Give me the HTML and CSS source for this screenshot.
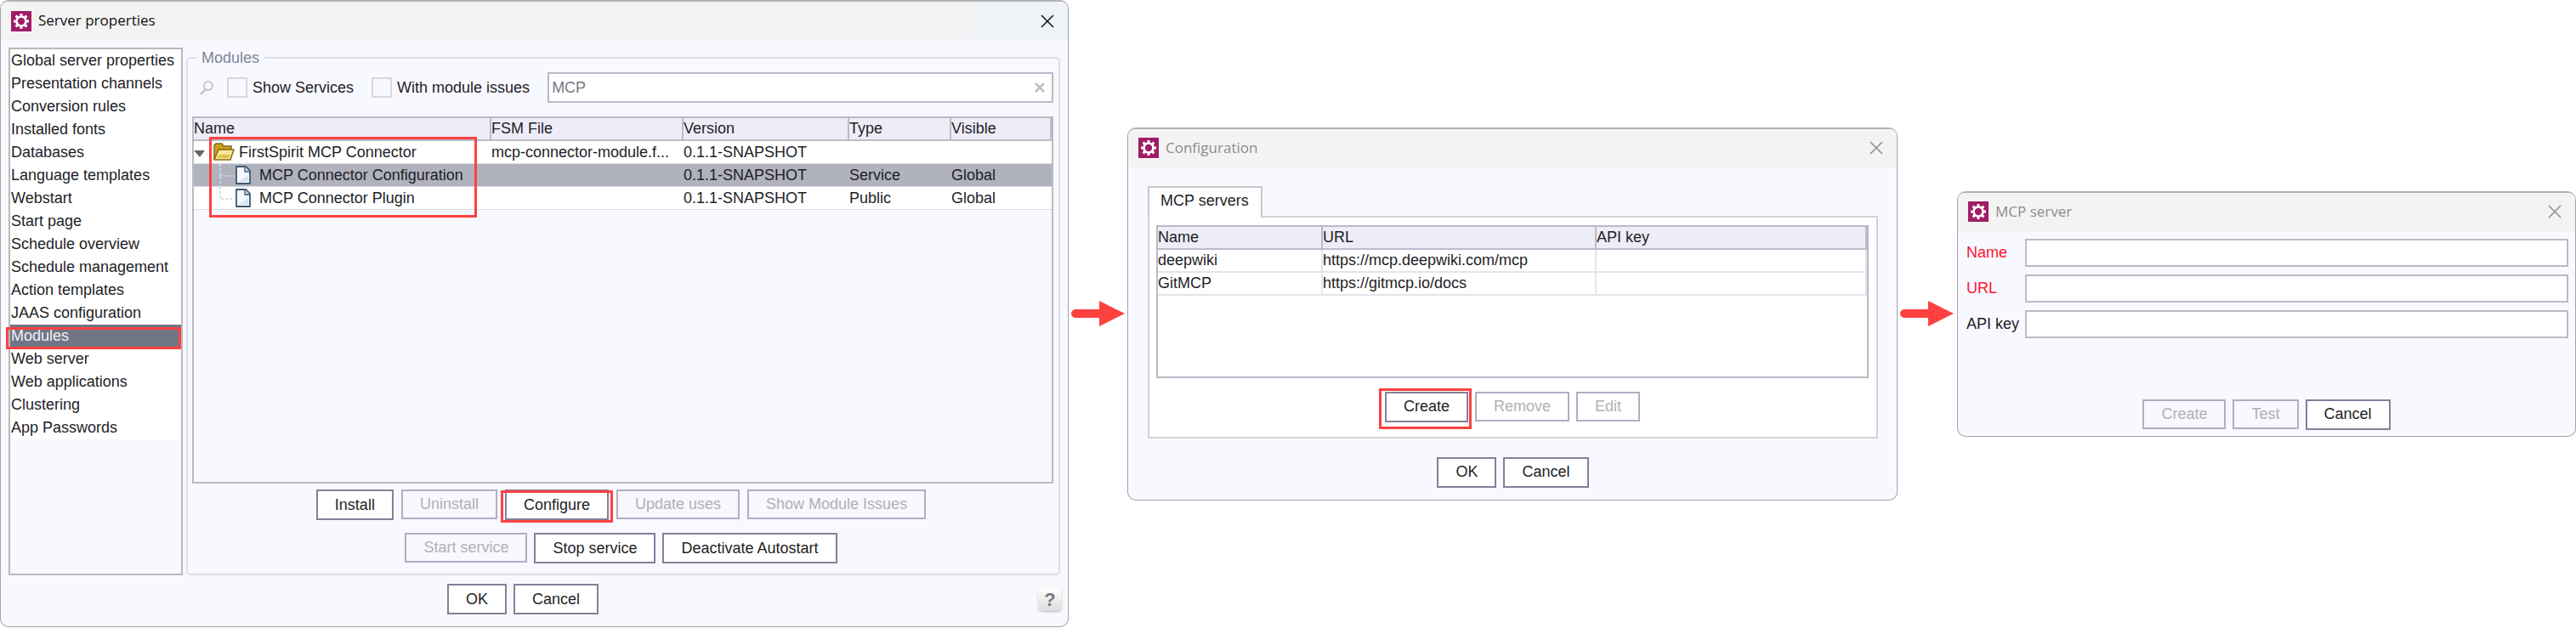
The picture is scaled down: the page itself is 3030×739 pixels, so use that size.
FILE: index.html
```html
<!DOCTYPE html>
<html lang="en">
<head>
  <meta charset="UTF-8">
  <meta name="viewport" content="width=device-width, initial-scale=1.0">
  <title>MCP Connector configuration</title>
  <link rel="stylesheet" href="styles.css">
</head>
<body>
  <!-- shared icons -->
  <svg class="sprite" aria-hidden="true">
    <symbol id="gear" viewBox="0 0 24 24">
      <rect width="24" height="24" fill="#a01c66"/>
      <g stroke="#fff" stroke-width="3">
        <path d="M12 3v18M3 12h18M5.600 5.600l12.800 12.800M18.400 5.600L5.600 18.400"/>
      </g>
      <circle cx="12" cy="12" r="5.500" fill="#a01c66" stroke="#fff" stroke-width="2.600"/>
    </symbol>
    <symbol id="close" viewBox="0 0 16 16">
      <path d="M1 1l14 14M15 1L1 15" fill="none" stroke="currentColor" stroke-width="1.500"/>
    </symbol>
    <symbol id="page" viewBox="0 0 20 24">
      <path d="M2 2h11l5 5v15H2z" fill="#f4f8fc" stroke="#3d5870" stroke-width="1.800" stroke-linejoin="round"/>
      <path d="M12 2v6h6" fill="#c9dced" stroke="#3d5870" stroke-width="1.300"/>
      <path d="M4 20h12V12z" fill="#d8e4ee"/>
    </symbol>
    <symbol id="arrow" viewBox="0 0 64 30">
      <path d="M5 10h28V0l30 15-30 15V20H5a5 5 0 0 1 0-10z" fill="#fd4141"/>
    </symbol>
  </svg>

  <div class="flow">
    <section class="window window-main">
      <div class="titlebar active">
        <svg class="app-icon"><use href="#gear"/></svg>
        <h1>Server properties</h1>
        <button class="close-btn" aria-label="Close"><svg><use href="#close"/></svg></button>
      </div>
      <div class="columns">
        <ul class="side-list">
          <li><a href="#">Global server properties</a></li>
          <li><a href="#">Presentation channels</a></li>
          <li><a href="#">Conversion rules</a></li>
          <li><a href="#">Installed fonts</a></li>
          <li><a href="#">Databases</a></li>
          <li><a href="#">Language templates</a></li>
          <li><a href="#">Webstart</a></li>
          <li><a href="#">Start page</a></li>
          <li><a href="#">Schedule overview</a></li>
          <li><a href="#">Schedule management</a></li>
          <li><a href="#">Action templates</a></li>
          <li><a href="#">JAAS configuration</a></li>
          <li class="selected"><a href="#">Modules</a></li>
          <li><a href="#">Web server</a></li>
          <li><a href="#">Web applications</a></li>
          <li><a href="#">Clustering</a></li>
          <li><a href="#">App Passwords</a></li>
        </ul>
        <fieldset class="modules">
          <legend>Modules</legend>
          <div class="filter">
            <svg class="search-icon" viewBox="0 0 18 18">
              <circle cx="11" cy="7" r="5" fill="none" stroke="#c4c4c8" stroke-width="2"/>
              <path d="M8 11l-6 6" stroke="#c4c4c8" stroke-width="2.500"/>
            </svg>
            <label><input type="checkbox"> Show Services</label>
            <label><input type="checkbox"> With module issues</label>
            <div class="search-box">
              <input type="text" value="MCP" aria-label="Filter modules">
              <button class="clear-btn" aria-label="Clear">
                <svg viewBox="0 0 12 12"><path d="M1 1l10 10M11 1L1 11" stroke="#bdbdc1" stroke-width="2.500"/></svg>
              </button>
            </div>
          </div>
          <div class="table-box module-table">
            <table>
              <colgroup><col class="c-name"><col class="c-file"><col class="c-version"><col class="c-type"><col></colgroup>
              <thead>
                <tr><th>Name</th><th>FSM File</th><th>Version</th><th>Type</th><th>Visible</th></tr>
              </thead>
              <tbody>
                <tr>
                  <td>
                    <div class="tree">
                      <svg class="tree-toggle" viewBox="0 0 23 27"><path d="M0 11h13l-6 8z" fill="#66666a"/><path d="M15 15h8" stroke="#c8c8ce" stroke-dasharray="2 2"/></svg>
                      <svg class="folder" viewBox="0 0 25 22">
                        <path d="M1 20V3l2-2h7l2 3h9v4" fill="#c99f22" stroke="#8a6a10" stroke-width="1.500"/>
                        <path d="M6 8h18l-4 12H1z" fill="#f6e69a" stroke="#8a6a10" stroke-width="1.500" stroke-linejoin="round"/>
                        <path d="M7 14h13l-2 4H4z" fill="#e3c34d"/>
                      </svg>
                      FirstSpirit MCP Connector
                    </div>
                  </td>
                  <td>mcp-connector-module.f...</td><td>0.1.1-SNAPSHOT</td><td></td><td></td>
                </tr>
                <tr class="selected">
                  <td>
                    <div class="tree child">
                      <svg class="branch" viewBox="0 0 18 27"><path d="M1 0v27M1 14h17" fill="none" stroke="#dcdce2" stroke-width="1.500" stroke-dasharray="3 2"/></svg>
                      <svg class="page"><use href="#page"/></svg>
                      MCP Connector Configuration
                    </div>
                  </td>
                  <td></td><td>0.1.1-SNAPSHOT</td><td>Service</td><td>Global</td>
                </tr>
                <tr>
                  <td>
                    <div class="tree child">
                      <svg class="branch" viewBox="0 0 18 27"><path d="M1 0v14h17" fill="none" stroke="#cfcfd6" stroke-width="1.500" stroke-dasharray="3 2"/></svg>
                      <svg class="page"><use href="#page"/></svg>
                      MCP Connector Plugin
                    </div>
                  </td>
                  <td></td><td>0.1.1-SNAPSHOT</td><td>Public</td><td>Global</td>
                </tr>
              </tbody>
            </table>
            <div class="mark mark-tree"></div>
          </div>
          <div class="buttons module-buttons">
            <button>Install</button>
            <button disabled>Uninstall</button>
            <button class="marked">Configure</button>
            <button disabled>Update uses</button>
            <button disabled>Show Module Issues</button>
          </div>
          <div class="buttons">
            <button disabled>Start service</button>
            <button>Stop service</button>
            <button>Deactivate Autostart</button>
          </div>
        </fieldset>
      </div>
      <div class="main-footer">
        <div class="buttons">
          <button>OK</button>
          <button>Cancel</button>
        </div>
        <button class="help-btn" aria-label="Help">?</button>
      </div>
    </section>

    <svg class="arrow" viewBox="0 0 64 30"><use href="#arrow"/></svg>

    <section class="window">
      <div class="titlebar">
        <svg class="app-icon"><use href="#gear"/></svg>
        <h2>Configuration</h2>
        <button class="close-btn" aria-label="Close"><svg><use href="#close"/></svg></button>
      </div>
      <div class="config-body">
        <button class="tab">MCP servers</button>
        <div class="tab-panel">
          <div class="table-box server-table">
            <table>
              <colgroup><col class="c-server"><col class="c-url"><col></colgroup>
              <thead>
                <tr><th>Name</th><th>URL</th><th>API key</th></tr>
              </thead>
              <tbody>
                <tr><td>deepwiki</td><td>https://mcp.deepwiki.com/mcp</td><td></td></tr>
                <tr><td>GitMCP</td><td>https://gitmcp.io/docs</td><td></td></tr>
              </tbody>
            </table>
          </div>
          <div class="buttons">
            <button class="marked marked-wide">Create</button>
            <button disabled>Remove</button>
            <button disabled>Edit</button>
          </div>
        </div>
        <div class="buttons config-footer">
          <button>OK</button>
          <button>Cancel</button>
        </div>
      </div>
    </section>

    <svg class="arrow" viewBox="0 0 64 30"><use href="#arrow"/></svg>

    <section class="window">
      <div class="titlebar">
        <svg class="app-icon"><use href="#gear"/></svg>
        <h2>MCP server</h2>
        <button class="close-btn" aria-label="Close"><svg><use href="#close"/></svg></button>
      </div>
      <form class="server-form">
        <label class="required" for="name">Name</label>
        <input type="text" id="name">
        <label class="required" for="url">URL</label>
        <input type="text" id="url">
        <label for="key">API key</label>
        <input type="text" id="key">
      </form>
      <div class="buttons form-footer">
        <button disabled>Create</button>
        <button disabled>Test</button>
        <button>Cancel</button>
      </div>
    </section>
  </div>
</body>
</html>
```
FILE: styles.css
```css
* {
  margin: 0;
  padding: 0;
  box-sizing: border-box;
}
body {
  background: #fff;
  color: #1e1e26;
  font-family: "Liberation Sans", Arial, sans-serif;
  font-size: 18px;
  line-height: 27px;
}
button, input {
  font: inherit;
  color: inherit;
}
.sprite {
  display: none;
}
.flow {
  display: grid;
  grid-template-columns: 1257fr 69px 906fr 70px 728fr;
  align-items: center;
}
.arrow {
  width: 64px;
  height: 30px;
  justify-self: center;
}

/* windows */
.window {
  background: #f8f8ff;
  border: 1px solid #a4a4a8;
  border-top: 2px solid #b2b2b2;
  border-radius: 10px;
}
.titlebar {
  display: flex;
  align-items: center;
  gap: 8px;
  height: 45px;
  padding: 0 16px 0 12px;
  background: #f3f3f3;
  border-radius: 8px 8px 0 0;
  color: #8c8c8c;
}
.titlebar.active {
  background: linear-gradient(90deg, #f3f3f3 80%, #eff3f7);
  color: #111;
}
.titlebar h1,
.titlebar h2 {
  flex: 1;
  padding-bottom: 2px;
  font-family: "Open Sans", sans-serif;
  font-size: 17px;
  font-weight: 400;
}
.app-icon {
  width: 24px;
  height: 24px;
}
.close-btn {
  display: flex;
  border: none;
  background: none;
}
.close-btn svg {
  width: 16px;
  height: 16px;
}

/* buttons */
.buttons {
  display: flex;
  justify-content: center;
  align-items: flex-start;
  gap: 8px;
}
.buttons button {
  position: relative;
  height: 36px;
  padding: 0 20px;
  border: 2px solid #83809b;
  background: #fff;
  white-space: nowrap;
}
.buttons button:disabled {
  height: 35px;
  border-color: #b0aec2;
  background: none;
  color: #b0b0b4;
}
.mark,
.marked::after,
.side-list .selected::after {
  content: "";
  position: absolute;
  border: 3px solid #fd4141;
  pointer-events: none;
  z-index: 1;
}
.marked::after {
  inset: -1px -7px -5px;
}
.marked-wide::after {
  inset: -6px -6px -10px -9px;
}

/* server properties */
.columns {
  display: grid;
  grid-template-columns: 205px 1fr;
  gap: 4px;
  padding: 9px 9px 0;
}
.side-list {
  list-style: none;
  border: 2px solid #b9b9bd;
}
.side-list li {
  position: relative;
  height: 27px;
  padding-left: 1px;
  background: #fff;
}
.side-list a {
  color: inherit;
  text-decoration: none;
  white-space: nowrap;
}
.side-list .selected {
  background: #707585;
  color: #f0f0f4;
}
.side-list .selected::after {
  inset: 3px 0 -2px -5px;
}
.modules {
  min-width: 0;
  padding: 5px 6px 12px 5px;
  border: 2px solid #dcdfe7;
  border-radius: 5px;
}
.modules legend {
  margin-left: 5px;
  padding: 0 6px;
  line-height: 24px;
  color: #81859a;
}
.modules .buttons {
  padding-right: 4px;
}
.filter {
  display: flex;
  align-items: center;
  gap: 15px;
  margin-bottom: 16px;
  padding-left: 8px;
}
.filter label {
  display: flex;
  align-items: center;
  gap: 6px;
  margin-right: 6px;
  white-space: nowrap;
}
.filter input[type="checkbox"] {
  appearance: none;
  width: 24px;
  height: 24px;
  border: 2px solid #d6d7df;
}
.search-icon {
  width: 18px;
  height: 18px;
}
.search-box {
  display: flex;
  flex: 1;
  align-items: center;
  height: 36px;
  padding: 0 8px 0 3px;
  border: 2px solid #b9bac7;
  background: #fff;
  color: #77777f;
}
.search-box input {
  flex: 1;
  border: none;
  outline: none;
}
.clear-btn {
  display: flex;
  border: none;
  background: none;
}
.clear-btn svg {
  width: 12px;
  height: 12px;
}

/* tables */
.table-box {
  position: relative;
  border: 2px solid #b9bac7;
}
.table-box table {
  width: 100%;
  table-layout: fixed;
  border-spacing: 0;
}
.table-box th {
  height: 27px;
  border-right: 2px solid #b9bcc9;
  border-bottom: 2px solid #b9bcc9;
  background: #eeecf7;
  font-weight: 400;
  line-height: 25px;
  text-align: left;
}
.table-box td {
  height: 27px;
  border-bottom: 1px solid #dcdfe7;
  background: #fff;
  line-height: 26px;
  white-space: nowrap;
}
.table-box .selected td {
  background: #b0b2bd;
}
.module-table {
  height: 432px;
  margin-bottom: 7px;
}
.c-name { width: 350px; }
.c-file { width: 226px; }
.c-version { width: 195px; }
.c-type { width: 120px; }
.tree {
  display: flex;
  align-items: center;
  height: 26px;
}
.tree-toggle {
  width: 23px;
  height: 27px;
}
.folder {
  width: 25px;
  height: 22px;
  margin-right: 5px;
}
.child {
  padding-left: 30px;
}
.branch {
  width: 18px;
  height: 27px;
}
.page {
  width: 20px;
  height: 24px;
  margin-right: 9px;
}
.mark-tree {
  left: 18px;
  top: 22px;
  width: 315px;
  height: 95px;
}
.module-buttons {
  gap: 9px;
  margin-bottom: 15px;
}
.main-footer {
  display: flex;
  align-items: center;
  padding: 10px 7px 14px 8px;
}
.main-footer .buttons {
  flex: 1;
}
.help-btn {
  width: 28px;
  height: 28px;
  border: none;
  border-radius: 5px;
  background: linear-gradient(#fff, #dedede);
  box-shadow: 0 1px 2px #b4b4b4;
  color: #77777a;
  font-size: 22px;
  font-weight: 700;
}

/* configuration */
.config-body {
  padding: 22px 22px 14px 23px;
}
.tab {
  position: relative;
  display: block;
  height: 37px;
  margin-bottom: -2px;
  padding: 0 14px 4px 13px;
  border: 2px solid #c8c8cc;
  border-bottom: none;
  background: #fff;
  z-index: 1;
}
.tab-panel {
  padding: 9px 9px 17px 8px;
  border: 2px solid #d2d2d6;
  background: #fff;
}
.server-table {
  height: 180px;
  margin-bottom: 16px;
}
.server-table td {
  border-right: 2px solid #e2e5ec;
  border-bottom: 2px solid #e2e5ec;
  line-height: 25px;
}
.c-server { width: 194px; }
.c-url { width: 322px; }
.config-footer {
  padding-top: 22px;
}

/* server form */
.server-form {
  display: grid;
  grid-template-columns: 60px 1fr;
  align-items: center;
  gap: 9px;
  padding: 9px 8px 72px 10px;
}
.server-form label {
  white-space: nowrap;
}
.server-form input {
  height: 33px;
  padding: 0 4px;
  border: 2px solid #b9bac7;
  background: #fff;
}
.server-form .required {
  color: #ff1430;
}
.form-footer {
  padding-bottom: 7px;
}
```
